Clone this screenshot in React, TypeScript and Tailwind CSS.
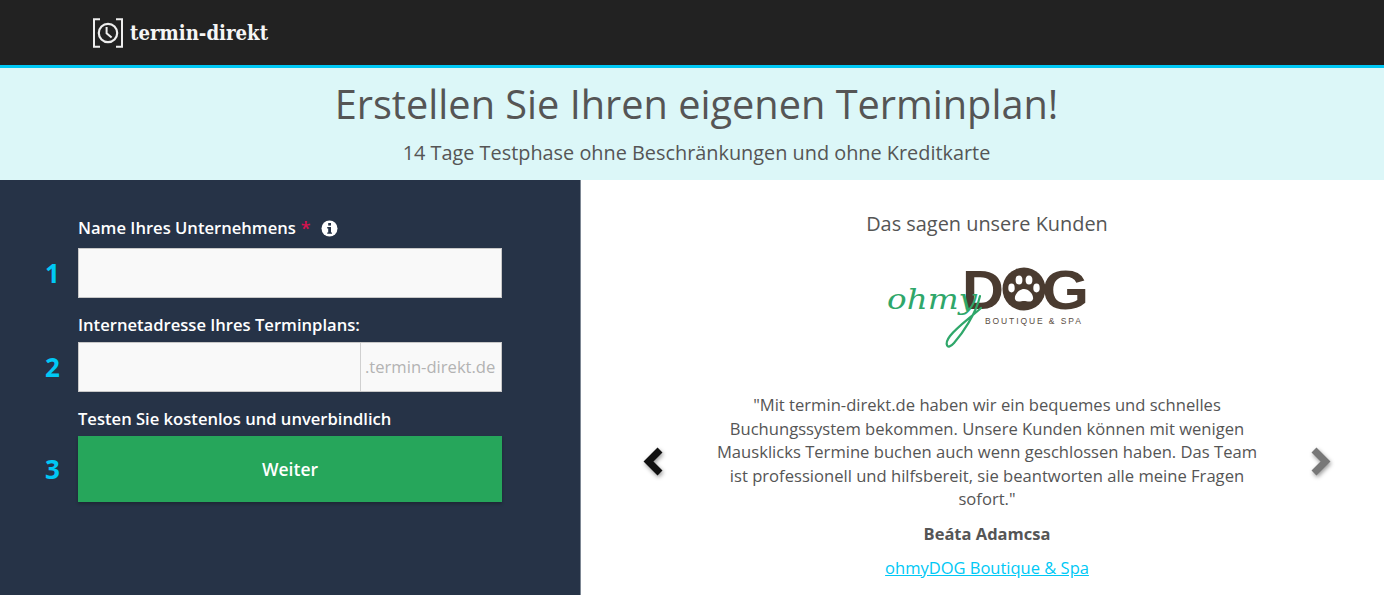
import React from "react";

function ClockLogo() {
  return (
    <svg width="32" height="30" viewBox="0 0 32 30" fill="none" stroke="#eeeeee" className="shrink-0">
      <path d="M8 1.200H2V28.800H8" strokeWidth="2" />
      <path d="M24 1.200H30V28.800H24" strokeWidth="2" />
      <circle cx="16" cy="15" r="9.200" strokeWidth="2.200" />
      <path d="M14.600 9V15.200L19.600 19.600" strokeWidth="2" />
    </svg>
  );
}

function OhMyDogLogo() {
  return (
    <svg width="201" height="92" viewBox="0 -10 201 92" className="block">
      <text x="75" y="41" fontFamily="'Liberation Sans', sans-serif" fontWeight="700" fontSize="55" fill="#4a3b30" textLength="42" lengthAdjust="spacingAndGlyphs">D</text>
      <circle cx="137" cy="21" r="21.500" fill="#4a3b30" />
      <path d="M137 21C142 21 147 27 146 31C145 35 140 33 137 33C134 33 129 35 128 31C127 27 132 21 137 21Z" fill="#fff" />
      <ellipse cx="124.500" cy="20" rx="3.200" ry="4.400" fill="#fff" />
      <ellipse cx="132" cy="12" rx="3.400" ry="4.600" fill="#fff" />
      <ellipse cx="142" cy="12" rx="3.400" ry="4.600" fill="#fff" />
      <ellipse cx="149.500" cy="20" rx="3.200" ry="4.400" fill="#fff" />
      <text x="155" y="41" fontFamily="'Liberation Sans', sans-serif" fontWeight="700" fontSize="55" fill="#4a3b30" textLength="47" lengthAdjust="spacingAndGlyphs">G</text>
      <text x="0" y="41" fontFamily="'DejaVu Serif', serif" fontStyle="italic" fontSize="27" fill="#2fa76a" textLength="90" lengthAdjust="spacingAndGlyphs">ohmy</text>
      <path d="M93 28C89 46 75 66 67 75C60 83 57 76 63 68C70 59 83 50 94 40" fill="none" stroke="#2fa76a" strokeWidth="2.200" strokeLinecap="round" />
      <text x="98" y="56" fontFamily="'Liberation Sans', sans-serif" fontWeight="400" fontSize="8.500" letterSpacing="1.900" fill="#5a4c42">BOUTIQUE &amp; SPA</text>
    </svg>
  );
}

function Chevron({ color, dir }: { color: string; dir: "l" | "r" }) {
  return (
    <svg width="21" height="31" viewBox="0 0 21 31" className="mt-[20px] shrink-0 overflow-visible drop-shadow-[1px_2px_2px_rgba(0,0,0,0.4)]">
      <path d={dir === "l" ? "M17 4L5.500 15.500L17 27" : "M4 4L15.500 15.500L4 27"} fill="none" stroke={color} strokeWidth="7" />
    </svg>
  );
}

function Step({ n, children }: { n: number; children: React.ReactNode }) {
  return (
    <div className="flex items-center">
      <div className="w-[78px] pl-[45px] text-[26px] font-bold leading-none text-[#00c8f5]">{n}</div>
      {children}
    </div>
  );
}

export default function App() {
  return (
    <div className="h-[595px] w-[1384px] overflow-hidden bg-white font-['Open_Sans',sans-serif] text-[#555]">
      <header className="flex h-[68px] items-center gap-[6px] border-b-[3px] border-[#00c8f5] bg-[#222] pl-[92px] pt-[1px]">
        <ClockLogo />
        <span className="font-['DejaVu_Serif_Condensed','DejaVu_Serif',serif] text-[20.2px] font-bold leading-none text-[#f5f5f5]">termin-direkt</span>
      </header>

      <section className="flex h-[112px] flex-col items-center bg-[#dcf7f8] pl-[9px] text-center">
        <h1 className="mt-[9px] text-[39.7px] font-normal leading-[54px] text-[#555]">Erstellen Sie Ihren eigenen Terminplan!</h1>
        <p className="mt-[8px] text-[19.87px] leading-[27px] text-[#555]">14 Tage Testphase ohne Beschränkungen und ohne Kreditkarte</p>
      </section>

      <main className="flex h-[415px]">
        <div className="w-[581px] shrink-0 border-r border-[#7d8794] bg-[#263347] pt-[36px]">
          <label className="flex h-[24px] items-center pl-[78px] text-[16.6px] font-semibold text-white">
            Name Ihres Unternehmens
            <span className="ml-[5px] text-[18px] text-[#d6124f]">*</span>
            <svg width="17" height="17" viewBox="0 0 17 17" className="ml-[10px]">
              <circle cx="8.500" cy="8.500" r="8" fill="#fff" />
              <rect x="7.200" y="3" width="2.800" height="2.600" fill="#263347" />
              <path d="M6.200 7H10V12.400H11V13.800H6.200V12.400H7.200V8.400H6.200Z" fill="#263347" />
            </svg>
          </label>
          <div className="mt-[8px]">
            <Step n={1}>
              <div className="h-[50px] w-[424px] border border-[#c8c8c8] bg-[#f9f9f9]" />
            </Step>
          </div>
          <label className="mt-[15px] flex h-[24px] items-center pl-[78px] text-[16.6px] font-semibold text-white">Internetadresse Ihres Terminplans:</label>
          <div className="mt-[5px]">
            <Step n={2}>
              <div className="flex h-[50px] w-[424px] border border-[#c8c8c8] bg-[#f9f9f9]">
                <div className="w-[282px] border-r border-[#d0d0d0]" />
                <div className="flex flex-1 items-center pl-[4px] text-[16.6px] text-[#b3b3b3]">.termin-direkt.de</div>
              </div>
            </Step>
          </div>
          <div className="mt-[15px] flex h-[24px] items-center pl-[78px] text-[16.6px] font-semibold text-white">Testen Sie kostenlos und unverbindlich</div>
          <div className="mt-[5px]">
            <Step n={3}>
              <button className="h-[66px] w-[424px] bg-[#26a65b] text-[17.500px] font-semibold text-white shadow-[0_2px_3px_rgba(0,0,0,0.25)]">Weiter</button>
            </Step>
          </div>
        </div>

        <div className="flex flex-1 flex-col items-center pl-[9px]">
          <h2 className="mt-[31px] text-[19.9px] font-normal leading-[26px] text-[#555]">Das sagen unsere Kunden</h2>
          <div className="mt-[21px] h-[92px]"><OhMyDogLogo /></div>
          <div className="mt-[43px] flex w-[688px] items-center justify-between">
            <Chevron color="#111" dir="l" />
            <div className="w-[550px] text-center text-[16.6px] leading-[23.5px] text-[#555]">
              "Mit termin-direkt.de haben wir ein bequemes und schnelles Buchungssystem bekommen. Unsere Kunden können mit wenigen Mausklicks Termine buchen auch wenn geschlossen haben. Das Team ist professionell und hilfsbereit, sie beantworten alle meine Fragen sofort."
            </div>
            <Chevron color="#777" dir="r" />
          </div>
          <div className="mt-[11px] text-[16.5px] font-bold leading-[24px] text-[#555]">Beáta Adamcsa</div>
          <a href="#" className="mt-[10px] text-[16.5px] leading-[24px] text-[#00c8f5] underline">ohmyDOG Boutique &amp; Spa</a>
        </div>
      </main>
    </div>
  );
}
